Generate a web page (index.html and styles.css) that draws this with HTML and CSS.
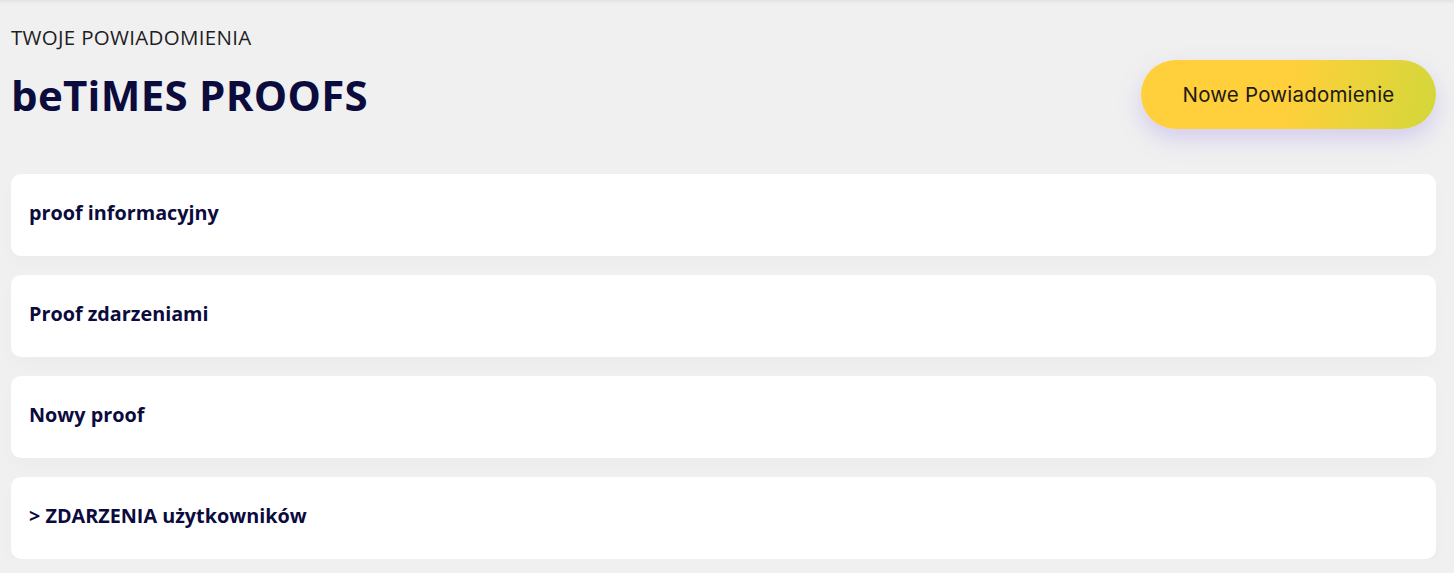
FILE: index.html
```html
<!DOCTYPE html>
<html lang="pl">
<head>
<meta charset="utf-8">
<title>beTiMES PROOFS</title>
<link rel="stylesheet" href="styles.css">
</head>
<body>
<div class="topshade"></div>
<main class="page">
  <header class="head">
    <div class="titles">
      <div class="eyebrow">TWOJE POWIADOMIENIA</div>
      <h1 class="title">beTiMES PROOFS</h1>
    </div>
    <button class="btn">Nowe Powiadomienie</button>
  </header>
  <ul class="list">
    <li class="card">proof informacyjny</li>
    <li class="card">Proof zdarzeniami</li>
    <li class="card">Nowy proof</li>
    <li class="card">&gt; ZDARZENIA użytkowników</li>
  </ul>
</main>
</body>
</html>
```

FILE: styles.css
```css
* { box-sizing: border-box; }
html, body {
  margin: 0;
  background: #f0f0f0;
  font-family: "Open Sans", "Noto Sans", sans-serif;
  overflow: hidden;
}
.topshade {
  height: 4px;
  background: linear-gradient(#e3e3e5, #f0f0f0);
}
.page {
  padding: 0 18px 0 11px;
}
.head {
  display: flex;
  justify-content: space-between;
  align-items: flex-start;
  padding-top: 20px;
}
.eyebrow {
  font-size: 20.5px;
  line-height: 26px;
  color: #1e1e24;
  letter-spacing: 0.3px;
}
.title {
  margin: 21px 0 0;
  font-size: 42px;
  line-height: 48px;
  font-weight: 700;
  color: #0b0b3d;
  letter-spacing: 0.3px;
}
.btn {
  margin-top: 36px;
  width: 295px;
  height: 69px;
  border: none;
  border-radius: 35px;
  background: linear-gradient(100deg, #ffd03b 0%, #ffd03b 50%, #d3d73a 100%);
  box-shadow: 0 10px 22px rgba(160, 140, 235, 0.35);
  font-family: "Inter", "Lato", sans-serif;
  font-size: 20.5px;
  color: #1e1a14;
  padding: 0;
  letter-spacing: 0.2px;
}
.list {
  list-style: none;
  margin: 45px 0 0;
  padding: 0;
  display: flex;
  flex-direction: column;
  gap: 19px;
}
.card {
  background: #fff;
  border-radius: 10px;
  height: 82px;
  display: flex;
  align-items: center;
  padding: 0 18px 5px 18px;
  font-size: 19.8px;
  font-weight: 700;
  color: #0b0b3d;
  box-shadow: 0 8px 18px rgba(0, 0, 0, 0.02);
}
```
